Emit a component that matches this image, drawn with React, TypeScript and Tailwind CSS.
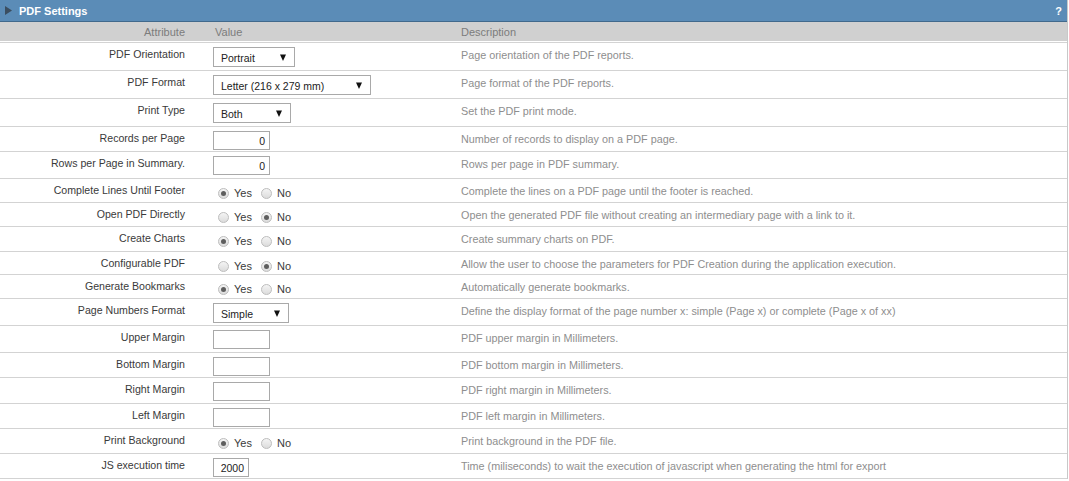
import React from "react";

type Row =
  | { label: string; kind: "select"; value: string; w: number; h: number; desc: string }
  | { label: string; kind: "input"; value: string; w: number; h: number; desc: string }
  | { label: string; kind: "radio"; yes: boolean; h: number; desc: string };

const rows: Row[] = [
  { label: "PDF Orientation", kind: "select", value: "Portrait", w: 82, h: 28, desc: "Page orientation of the PDF reports." },
  { label: "PDF Format", kind: "select", value: "Letter (216 x 279 mm)", w: 158, h: 28, desc: "Page format of the PDF reports." },
  { label: "Print Type", kind: "select", value: "Both", w: 78, h: 28, desc: "Set the PDF print mode." },
  { label: "Records per Page", kind: "input", value: "0", w: 57, h: 25, desc: "Number of records to display on a PDF page." },
  { label: "Rows per Page in Summary.", kind: "input", value: "0", w: 57, h: 27, desc: "Rows per page in PDF summary." },
  { label: "Complete Lines Until Footer", kind: "radio", yes: true, h: 24, desc: "Complete the lines on a PDF page until the footer is reached." },
  { label: "Open PDF Directly", kind: "radio", yes: false, h: 24, desc: "Open the generated PDF file without creating an intermediary page with a link to it." },
  { label: "Create Charts", kind: "radio", yes: true, h: 25, desc: "Create summary charts on PDF." },
  { label: "Configurable PDF", kind: "radio", yes: false, h: 23, desc: "Allow the user to choose the parameters for PDF Creation during the application execution." },
  { label: "Generate Bookmarks", kind: "radio", yes: true, h: 24, desc: "Automatically generate bookmarks." },
  { label: "Page Numbers Format", kind: "select", value: "Simple", w: 76, h: 27, desc: "Define the display format of the page number x: simple (Page x) or complete (Page x of xx)" },
  { label: "Upper Margin", kind: "input", value: "", w: 57, h: 27, desc: "PDF upper margin in Millimeters." },
  { label: "Bottom Margin", kind: "input", value: "", w: 57, h: 25, desc: "PDF bottom margin in Millimeters." },
  { label: "Right Margin", kind: "input", value: "", w: 57, h: 26, desc: "PDF right margin in Millimeters." },
  { label: "Left Margin", kind: "input", value: "", w: 57, h: 25, desc: "PDF left margin in Millimeters." },
  { label: "Print Background", kind: "radio", yes: true, h: 25, desc: "Print background in the PDF file." },
  { label: "JS execution time", kind: "input", value: "2000", w: 36, h: 25, desc: "Time (miliseconds) to wait the execution of javascript when generating the html for export" },
];

function Radio({ checked, label }: { checked: boolean; label: string }) {
  return (
    <span className="inline-flex items-center">
      <span className="w-[11px] h-[11px] rounded-full border border-[#bdbdbd] bg-gradient-to-b from-[#f4f4f4] to-[#dcdcdc] flex items-center justify-center">
        {checked && <span className="w-[5px] h-[5px] rounded-full bg-[#5e5e5e]" />}
      </span>
      <span className="ml-[5px] text-[11px] leading-[12px] text-[#3a3a3a]">{label}</span>
    </span>
  );
}

function Value({ row }: { row: Row }) {
  if (row.kind === "select") {
    return (
      <div
        className="mt-[4px] h-[20px] border border-[#a9a9a9] bg-white flex items-center justify-between pl-[7px] pr-[8px]"
        style={{ width: row.w }}
      >
        <span className="text-[10.5px] leading-[12px] text-[#222] pt-[1px]">{row.value}</span>
        <svg width="6" height="7" viewBox="0 0 6 7">
          <polygon points="0,0.5 6,0.5 3,7" fill="#111" />
        </svg>
      </div>
    );
  }
  if (row.kind === "input") {
    return (
      <div
        className="mt-[4px] h-[19px] border border-[#a9a9a9] bg-white flex items-center justify-end pr-[4px]"
        style={{ width: row.w }}
      >
        <span className="text-[10.5px] leading-[12px] text-[#222] pt-[1px]">{row.value}</span>
      </div>
    );
  }
  return (
    <div className="pt-[8px] pl-[5px] flex items-center gap-[9px]">
      <Radio checked={row.yes} label="Yes" />
      <Radio checked={!row.yes} label="No" />
    </div>
  );
}

export default function App() {
  return (
    <div className="w-[1069px] h-[481px] bg-white overflow-hidden" style={{ fontFamily: '"Liberation Sans", Arial, sans-serif' }}>
      <div className="w-[1068px] border-r border-[#c8c8c8]">
        <div className="h-[22px] bg-[#5b8cb7] border-b border-[#41698c] flex items-center justify-between pl-[5px] pr-[5px]">
          <div className="flex items-center">
            <svg width="7" height="9" viewBox="0 0 7 9">
              <polygon points="0,0 7,4.5 0,9" fill="#3b4e60" />
            </svg>
            <span className="ml-[7px] text-white font-bold text-[11px] leading-[12px]">PDF Settings</span>
          </div>
          <span className="text-white font-bold text-[11px] leading-[12px]">?</span>
        </div>
        <div className="h-[21px] border-b border-[#d3d3d3]">
          <div className="h-[19px] bg-[#d0d0d0] grid grid-cols-[185px_275px_1fr] items-center text-[11px] leading-[12px] text-[#7c7c7c]">
            <div className="text-right">Attribute</div>
            <div className="pl-[30px]">Value</div>
            <div className="pl-[1px]">Description</div>
          </div>
        </div>
        {rows.map((row, i) => (
          <div
            key={i}
            className="grid grid-cols-[185px_28px_247px_1fr] border-b border-[#d3d3d3] box-border"
            style={{ height: row.h }}
          >
            <div className="text-right pt-[5px] text-[10.6px] leading-[12px] text-[#3a3a3a] whitespace-nowrap">{row.label}</div>
            <div />
            <div>
              <Value row={row} />
            </div>
            <div className="pt-[6px] pl-[1px] text-[10.8px] leading-[12px] text-[#8e8e8e] whitespace-nowrap">{row.desc}</div>
          </div>
        ))}
      </div>
    </div>
  );
}
